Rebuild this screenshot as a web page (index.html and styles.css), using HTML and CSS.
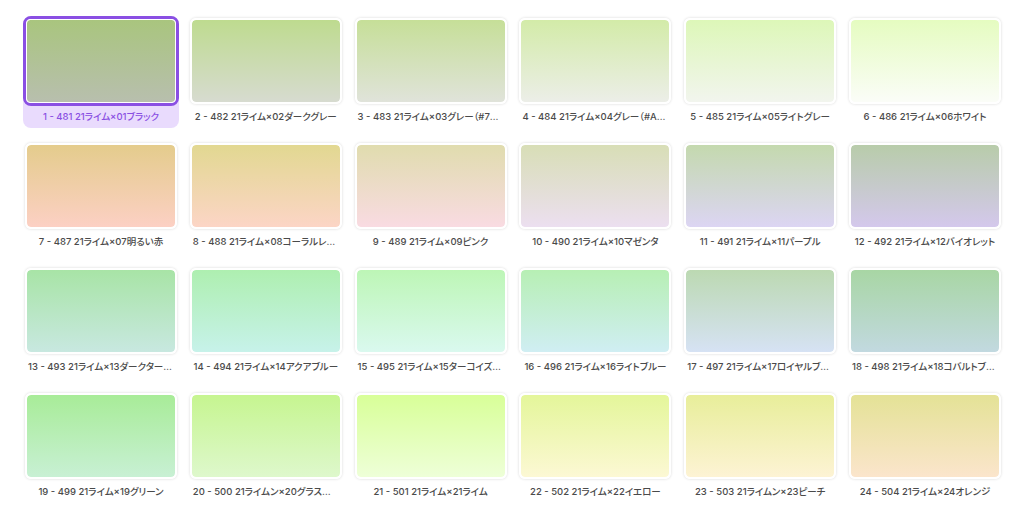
FILE: index.html
```html
<!DOCTYPE html>
<html lang="ja">
<head>
<meta charset="utf-8">
<title>21ライム</title>
<link rel="stylesheet" href="styles.css">
</head>
<body>
<div class="grid">
  <div class="item sel"><div class="frame"><div class="grad g1"></div></div><div class="label">1 - 481 21ライム×01ブラック</div></div>
  <div class="item"><div class="frame"><div class="grad g2"></div></div><div class="label">2 - 482 21ライム×02ダークグレー</div></div>
  <div class="item"><div class="frame"><div class="grad g3"></div></div><div class="label">3 - 483 21ライム×03グレー（#737373）</div></div>
  <div class="item"><div class="frame"><div class="grad g4"></div></div><div class="label">4 - 484 21ライム×04グレー（#A6A6A6）</div></div>
  <div class="item"><div class="frame"><div class="grad g5"></div></div><div class="label">5 - 485 21ライム×05ライトグレー</div></div>
  <div class="item"><div class="frame"><div class="grad g6"></div></div><div class="label">6 - 486 21ライム×06ホワイト</div></div>

  <div class="item"><div class="frame"><div class="grad g7"></div></div><div class="label">7 - 487 21ライム×07明るい赤</div></div>
  <div class="item"><div class="frame"><div class="grad g8"></div></div><div class="label">8 - 488 21ライム×08コーラルレッド</div></div>
  <div class="item"><div class="frame"><div class="grad g9"></div></div><div class="label">9 - 489 21ライム×09ピンク</div></div>
  <div class="item"><div class="frame"><div class="grad g10"></div></div><div class="label">10 - 490 21ライム×10マゼンタ</div></div>
  <div class="item"><div class="frame"><div class="grad g11"></div></div><div class="label">11 - 491 21ライム×11パープル</div></div>
  <div class="item"><div class="frame"><div class="grad g12"></div></div><div class="label">12 - 492 21ライム×12バイオレット</div></div>

  <div class="item"><div class="frame"><div class="grad g13"></div></div><div class="label">13 - 493 21ライム×13ダークターコイズ</div></div>
  <div class="item"><div class="frame"><div class="grad g14"></div></div><div class="label">14 - 494 21ライム×14アクアブルー</div></div>
  <div class="item"><div class="frame"><div class="grad g15"></div></div><div class="label">15 - 495 21ライム×15ターコイズブルー</div></div>
  <div class="item"><div class="frame"><div class="grad g16"></div></div><div class="label">16 - 496 21ライム×16ライトブルー</div></div>
  <div class="item"><div class="frame"><div class="grad g17"></div></div><div class="label">17 - 497 21ライム×17ロイヤルブルー</div></div>
  <div class="item"><div class="frame"><div class="grad g18"></div></div><div class="label">18 - 498 21ライム×18コバルトブルー</div></div>

  <div class="item"><div class="frame"><div class="grad g19"></div></div><div class="label">19 - 499 21ライム×19グリーン</div></div>
  <div class="item"><div class="frame"><div class="grad g20"></div></div><div class="label">20 - 500 21ライムン×20グラスグリーン</div></div>
  <div class="item"><div class="frame"><div class="grad g21"></div></div><div class="label">21 - 501 21ライム×21ライム</div></div>
  <div class="item"><div class="frame"><div class="grad g22"></div></div><div class="label">22 - 502 21ライム×22イエロー</div></div>
  <div class="item"><div class="frame"><div class="grad g23"></div></div><div class="label">23 - 503 21ライムン×23ピーチ</div></div>
  <div class="item"><div class="frame"><div class="grad g24"></div></div><div class="label">24 - 504 21ライム×24オレンジ</div></div>
</div>
</body>
</html>
```
FILE: styles.css
```css
html, body {
  margin: 0;
  padding: 0;
  background: #ffffff;
}

body {
  font-family: Inter, "Noto Sans CJK JP", sans-serif;
}

.grid {
  display: grid;
  grid-template-columns: repeat(6, 156px);
  column-gap: 8.8px;
  row-gap: 13px;
  padding: 16px 0 0 23px;
}

.item {
  display: flex;
  flex-direction: column;
  border-radius: 8px;
}

.frame {
  box-sizing: border-box;
  height: 90px;
  padding: 2px;
  border-radius: 8px;
}

.grad {
  box-sizing: border-box;
  width: 100%;
  height: 100%;
  border: 2px solid #ffffff;
  border-radius: 6px;
  box-shadow: 0 0 3px rgba(0, 0, 0, 0.16);
  background-clip: padding-box;
}

.item.sel {
  background: #e9dbfd;
}

.item.sel .frame {
  padding: 0;
  border: 3px solid #8a4fe3;
  background: #ffffff;
}

.item.sel .grad {
  border-width: 1px;
  border-radius: 4px;
  box-shadow: none;
}

.label {
  height: 22px;
  line-height: 22px;
  font-size: 9.5px;
  font-weight: 500;
  font-feature-settings: "palt" 1;
  color: #4a4a4a;
  text-align: center;
  white-space: nowrap;
  overflow: hidden;
  text-overflow: ellipsis;
  padding: 0 5px;
}

.item.sel .label {
  color: #8a4fe3;
}

.g1 { background-image: linear-gradient(#a9c57e, #b8bfae); }
.g2 { background-image: linear-gradient(#bedb8f, #d7dbd0); }
.g3 { background-image: linear-gradient(#c6df98, #e0e3da); }
.g4 { background-image: linear-gradient(#d3eba8, #eceee8); }
.g5 { background-image: linear-gradient(#ddf7b8, #f2f5ee); }
.g6 { background-image: linear-gradient(#e5fcc0, #fbfdf8); }
.g7 { background-image: linear-gradient(#e4cc8c, #fcd0c4); }
.g8 { background-image: linear-gradient(#e2d891, #fcd5c6); }
.g9 { background-image: linear-gradient(#e0dcae, #f9dbe2); }
.g10 { background-image: linear-gradient(#d8deb6, #ecdff0); }
.g11 { background-image: linear-gradient(#c4d9ae, #dcd5f3); }
.g12 { background-image: linear-gradient(#b8ccaa, #d4c8ec); }
.g13 { background-image: linear-gradient(#a8e4a6, #c8e8e0); }
.g14 { background-image: linear-gradient(#aeefb0, #c7f2ea); }
.g15 { background-image: linear-gradient(#bdf6b6, #daf9ef); }
.g16 { background-image: linear-gradient(#b7efb4, #d0eef3); }
.g17 { background-image: linear-gradient(#bcd9b2, #d6e2f4); }
.g18 { background-image: linear-gradient(#a8d6a4, #c2d9e0); }
.g19 { background-image: linear-gradient(#a8ec98, #c8f0d4); }
.g20 { background-image: linear-gradient(#c6f590, #def8cc); }
.g21 { background-image: linear-gradient(#d8ff98, #eeffd8); }
.g22 { background-image: linear-gradient(#e4f69a, #fcf8d4); }
.g23 { background-image: linear-gradient(#e8ee9a, #fdf3d4); }
.g24 { background-image: linear-gradient(#e4e296, #fbe5cc); }
```
